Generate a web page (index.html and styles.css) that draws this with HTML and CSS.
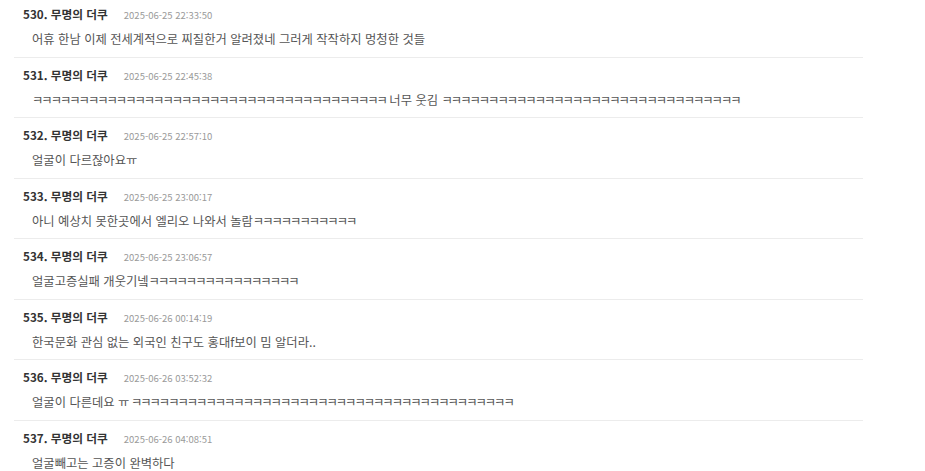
FILE: index.html
```html
<!DOCTYPE html>
<html lang="ko">
<head>
<meta charset="utf-8">
<link rel="stylesheet" href="styles.css">
</head>
<body>
<div class="list">
  <div class="item">
    <div class="head"><span class="num">530.</span> <span class="name">무명의 더쿠</span><span class="date">2025-06-25 22:33:50</span></div>
    <div class="body">어휴 한남 이제 전세계적으로 찌질한거 알려졌네 그러게 작작하지 멍청한 것들</div>
  </div>
  <div class="item">
    <div class="head"><span class="num">531.</span> <span class="name">무명의 더쿠</span><span class="date">2025-06-25 22:45:38</span></div>
    <div class="body"><span class="jamo">ㅋㅋㅋㅋㅋㅋㅋㅋㅋㅋㅋㅋㅋㅋㅋㅋㅋㅋㅋㅋㅋㅋㅋㅋㅋㅋㅋㅋㅋㅋㅋㅋㅋㅋㅋㅋㅋㅋ</span> 너무 웃김 <span class="jamo">ㅋㅋㅋㅋㅋㅋㅋㅋㅋㅋㅋㅋㅋㅋㅋㅋㅋㅋㅋㅋㅋㅋㅋㅋㅋㅋㅋㅋㅋㅋㅋㅋ</span></div>
  </div>
  <div class="item">
    <div class="head"><span class="num">532.</span> <span class="name">무명의 더쿠</span><span class="date">2025-06-25 22:57:10</span></div>
    <div class="body">얼굴이 다르잖아요<span class="jamo">ㅠ</span></div>
  </div>
  <div class="item">
    <div class="head"><span class="num">533.</span> <span class="name">무명의 더쿠</span><span class="date">2025-06-25 23:00:17</span></div>
    <div class="body">아니 예상치 못한곳에서 엘리오 나와서 놀람<span class="jamo">ㅋㅋㅋㅋㅋㅋㅋㅋㅋㅋㅋ</span></div>
  </div>
  <div class="item">
    <div class="head"><span class="num">534.</span> <span class="name">무명의 더쿠</span><span class="date">2025-06-25 23:06:57</span></div>
    <div class="body">얼굴고증실패 개웃기넼<span class="jamo">ㅋㅋㅋㅋㅋㅋㅋㅋㅋㅋㅋㅋㅋㅋㅋㅋ</span></div>
  </div>
  <div class="item">
    <div class="head"><span class="num">535.</span> <span class="name">무명의 더쿠</span><span class="date">2025-06-26 00:14:19</span></div>
    <div class="body">한국문화 관심 없는 외국인 친구도 홍대f보이 밈 알더라..</div>
  </div>
  <div class="item">
    <div class="head"><span class="num">536.</span> <span class="name">무명의 더쿠</span><span class="date">2025-06-26 03:52:32</span></div>
    <div class="body">얼굴이 다른데요 <span class="jamo">ㅠ</span> <span class="jamo">ㅋㅋㅋㅋㅋㅋㅋㅋㅋㅋㅋㅋㅋㅋㅋㅋㅋㅋㅋㅋㅋㅋㅋㅋㅋㅋㅋㅋㅋㅋㅋㅋㅋㅋㅋㅋㅋㅋㅋㅋㅋ</span></div>
  </div>
  <div class="item">
    <div class="head"><span class="num">537.</span> <span class="name">무명의 더쿠</span><span class="date">2025-06-26 04:08:51</span></div>
    <div class="body">얼굴빼고는 고증이 완벽하다</div>
  </div>
</div>
</body>
</html>
```
FILE: styles.css
```css
html, body {
  margin: 0;
  padding: 0;
  background: #fff;
}
body {
  font-family: "Noto Sans CJK KR", "Noto Sans", sans-serif;
  color: #333;
}
.list {
  width: 849px;
  margin-left: 14px;
  margin-top: -3px;
}
.item {
  padding: 10px 0 7.5px 9px;
  border-bottom: 1px solid #ececec;
}
.item:last-child {
  border-bottom: none;
}
.head {
  height: 14px;
  line-height: 14px;
  font-size: 11.7px;
  white-space: nowrap;
}
.num, .name {
  font-weight: bold;
  color: #333;
}
.date {
  margin-left: 16px;
  font-size: 9.5px;
  color: #9a9a9a;
}
.body {
  margin-top: 8px;
  padding-left: 9px;
  height: 20px;
  line-height: 20px;
  font-size: 12.3px;
  color: #555;
  white-space: nowrap;
}
.jamo {
  letter-spacing: -2px;
}
```
